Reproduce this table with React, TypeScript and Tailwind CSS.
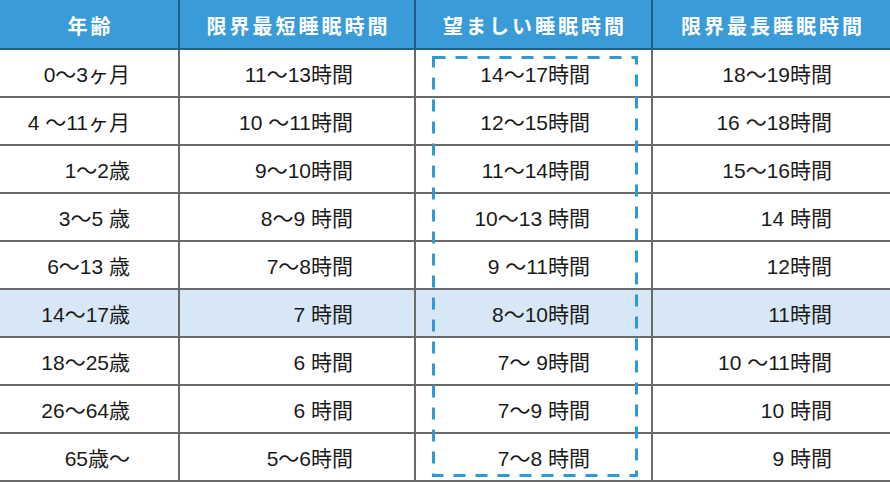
import React from "react";

const rows: [string, string, string, string][] = [
  ["0〜3ヶ月", "11〜13時間", "14〜17時間", "18〜19時間"],
  ["4 〜11ヶ月", "10 〜11時間", "12〜15時間", "16 〜18時間"],
  ["1〜2歳", "9〜10時間", "11〜14時間", "15〜16時間"],
  ["3〜5 歳", "8〜9 時間", "10〜13 時間", "14 時間"],
  ["6〜13 歳", "7〜8時間", "9 〜11時間", "12時間"],
  ["14〜17歳", "7 時間", "8〜10時間", "11時間"],
  ["18〜25歳", "6 時間", "7〜 9時間", "10 〜11時間"],
  ["26〜64歳", "6 時間", "7〜9 時間", "10 時間"],
  ["65歳〜", "5〜6時間", "7〜8 時間", "9 時間"],
];

const headers = ["年齢", "限界最短睡眠時間", "望ましい睡眠時間", "限界最長睡眠時間"];

const cols = "grid grid-cols-[180px_236px_237px_237px]";
const pads = ["pr-[48px]", "pr-[61px]", "pr-[61px]", "pr-[58px]"];

export default function App() {
  return (
    <div
      className="relative w-[890px] h-[482px] bg-white overflow-hidden"
      style={{ fontFamily: '"Liberation Sans", "Noto Sans CJK JP", sans-serif' }}
    >
      <div className={`${cols} h-[50px] bg-[#3a9bd9] border-b-2 border-[#245f86]`}>
        {headers.map((h, i) => (
          <div
            key={h}
            className={`flex items-center justify-center pt-[3px] pl-[3px] text-white text-[20px] font-bold tracking-[3px] ${
              i < 3 ? "border-r-2 border-[#1f5b84]" : ""
            }`}
            style={{ fontFamily: '"Noto Sans CJK JP", sans-serif' }}
          >
            {h}
          </div>
        ))}
      </div>
      {rows.map((r, ri) => (
        <div
          key={ri}
          className={`${cols} h-[48px] border-b-2 border-[#6a6a6a] ${ri === 5 ? "bg-[#d7e7f6]" : "bg-white"}`}
        >
          {r.map((c, ci) => (
            <div
              key={ci}
              className={`flex items-center justify-end pt-[3px] text-[21px] text-[#1a1a1a] whitespace-pre ${pads[ci]} ${
                ci < 3 ? "border-r-2 border-[#6a6a6a]" : ""
              }`}
            >
              {c}
            </div>
          ))}
        </div>
      ))}
      <svg
        className="absolute left-[432px] top-[56px] pointer-events-none"
        width="206"
        height="421"
        viewBox="0 0 206 421"
      >
        <rect
          x="1.5"
          y="1.5"
          width="203"
          height="418"
          fill="none"
          stroke="#2f9ad8"
          strokeWidth="3"
          strokeDasharray="12 10"
        />
      </svg>
    </div>
  );
}
